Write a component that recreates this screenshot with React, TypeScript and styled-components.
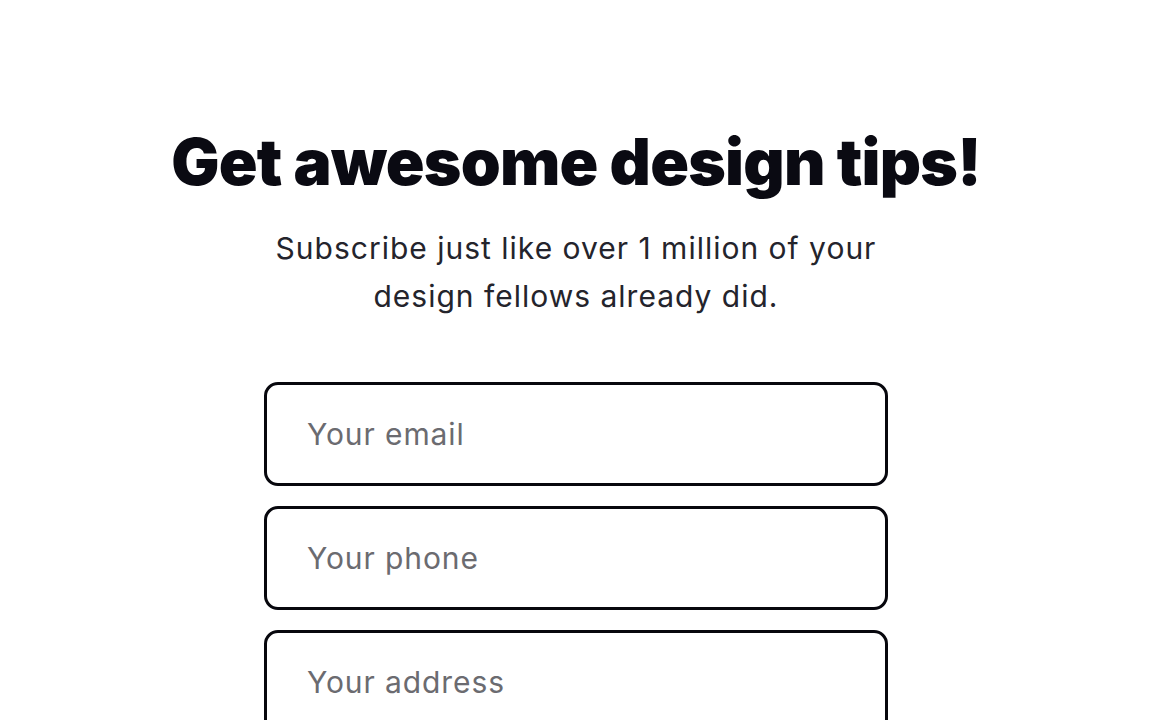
import React from "react";
import styled, { createGlobalStyle } from "styled-components";

const Global = createGlobalStyle`
  html, body { margin: 0; padding: 0; background: #ffffff; }
  body { font-family: Inter, "Noto Sans", sans-serif; }
  * { box-sizing: border-box; }
`;

const Page = styled.main`
  display: flex;
  flex-direction: column;
  align-items: center;
  padding-top: 124px;
  height: 720px;
  overflow: hidden;
`;

const Title = styled.h1`
  margin: 0;
  font-family: Inter, "Noto Sans", sans-serif;
  font-weight: 900;
  font-size: 64px;
  line-height: 76px;
  letter-spacing: -0.75px;
  color: #0a0a12;
`;

const Lead = styled.p`
  margin: 24px 0 0;
  width: 680px;
  text-align: center;
  font-size: 30px;
  line-height: 48px;
  letter-spacing: 1px;
  font-weight: 400;
  color: #24242c;
`;

const Form = styled.form`
  margin-top: 62px;
  display: flex;
  flex-direction: column;
  gap: 20px;
  width: 624px;
`;

const Field = styled.input`
  display: block;
  width: 100%;
  height: 104px;
  padding: 0 40px;
  border: 3px solid #07070d;
  border-radius: 14px;
  background: #fff;
  font-family: Inter, "Noto Sans", sans-serif;
  font-size: 30px;
  letter-spacing: 0.9px;
  color: #0b0b14;
  outline: none;
  &::placeholder { color: #6b6b70; }
`;

export default function App() {
  return (
    <>
      <Global />
      <Page>
        <Title>Get awesome design tips!</Title>
        <Lead>Subscribe just like over 1 million of your design fellows already did.</Lead>
        <Form onSubmit={(e) => e.preventDefault()}>
          <Field type="email" placeholder="Your email" />
          <Field type="tel" placeholder="Your phone" />
          <Field type="text" placeholder="Your address" />
        </Form>
      </Page>
    </>
  );
}
